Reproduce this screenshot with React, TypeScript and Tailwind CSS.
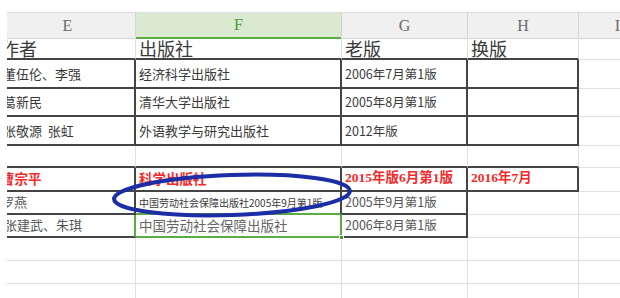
import React from 'react';

// 表格截图：出版信息对照（带圈注）
const cjk = "font-['Noto_Sans_CJK_SC',sans-serif]";
const row = 'grid grid-cols-[136px_206px_126px_111px_78px]';

function HeaderCell({ label, active }: { label: string; active?: boolean }) {
  return active ? (
    <div className="flex items-center justify-center bg-[#d9ead1] border-r border-r-[#d0d0d0] border-b-2 border-b-[#5dab44] text-[#4a9a33]">
      {label}
    </div>
  ) : (
    <div className="flex items-center justify-center bg-[#f0f0f0] border-r border-b border-[#d4d4d4] text-[#6a6a6a]">
      {label}
    </div>
  );
}

export default function App() {
  return (
    <div className="relative w-[620px] h-[298px] bg-white overflow-hidden">
      <div className="pt-[12px] pl-[7px]">
        <div className="overflow-hidden border-t border-[#dedede]">
          <div className={`-ml-[7px] ${cjk} text-[#3a3a3a]`}>
            {/* 列标题 */}
            <div className={`${row} h-[23px] font-['Liberation_Serif',serif] text-[16px]`}>
              <HeaderCell label="E" />
              <HeaderCell label="F" active />
              <HeaderCell label="G" />
              <HeaderCell label="H" />
              <HeaderCell label="I" />
            </div>

            {/* 表头 */}
            <div className={`${row} h-[24px] text-[18px] leading-[20px]`}>
              <div className="flex items-end pl-[1px] border-r border-r-[#e0e0e0] border-b-2 border-b-[#444]">作者</div>
              <div className="flex items-end pl-[3px] border-r border-r-[#e0e0e0] border-b-2 border-b-[#444]">出版社</div>
              <div className="flex items-end pl-[3px] border-r border-r-[#e0e0e0] border-b-2 border-b-[#444]">老版</div>
              <div className="flex items-end pl-[3px] border-r border-r-[#e0e0e0] border-b-2 border-b-[#444]">换版</div>
              <div className="border-r border-b border-[#e0e0e0]" />
            </div>

            {/* 第一组 */}
            {[
              { h: 'h-[29px]', a: '董伍伦、李强', b: '经济科学出版社', c: '2006年7月第1版' },
              { h: 'h-[28px]', a: '葛新民', b: '清华大学出版社', c: '2005年8月第1版' },
              { h: 'h-[29px]', a: '张敬源\u00a0\u00a0张虹', b: '外语教学与研究出版社', c: '2012年版' },
            ].map((r, i) => (
              <div key={i} className={`${row} ${r.h} text-[13px] leading-[16px]`}>
                <div className="flex items-end pb-[5px] pl-[3px] whitespace-nowrap border-r-2 border-b-2 border-[#444]">{r.a}</div>
                <div className="flex items-end pb-[5px] pl-[3px] whitespace-nowrap border-r-2 border-b-2 border-[#444]">{r.b}</div>
                <div className="flex items-end pb-[5px] pl-[3px] whitespace-nowrap text-[12.5px] border-r-2 border-b-2 border-[#444]">{r.c}</div>
                <div className="border-r-2 border-b-2 border-[#444]" />
                <div className="border-r border-b border-[#e0e0e0]" />
              </div>
            ))}

            {/* 空行 */}
            <div className={`${row} h-[22px]`}>
              <div className="border-r border-r-[#e0e0e0] border-b-2 border-b-[#444]" />
              <div className="border-r border-r-[#e0e0e0] border-b-2 border-b-[#444]" />
              <div className="border-r border-r-[#e0e0e0] border-b-2 border-b-[#444]" />
              <div className="border-r border-r-[#e0e0e0] border-b-2 border-b-[#444]" />
              <div className="border-r border-b border-[#e0e0e0]" />
            </div>

            {/* 新版（红字） */}
            <div className={`${row} h-[24px] text-[13.5px] leading-[16px] font-bold text-[#f42a2a]`}>
              <div className="flex items-end pb-[4px] pl-[1px] whitespace-nowrap border-r-2 border-b-2 border-[#444]">曹宗平</div>
              <div className="flex items-end pb-[4px] pl-[3px] whitespace-nowrap border-r-2 border-b-2 border-[#444]">科学出版社</div>
              <div className="flex items-end pb-[4px] pl-[3px] whitespace-nowrap font-['Liberation_Serif','Noto_Sans_CJK_SC',serif] border-r-2 border-b-2 border-[#444]">2015年版6月第1版</div>
              <div className="flex items-end pb-[4px] pl-[3px] whitespace-nowrap font-['Liberation_Serif','Noto_Sans_CJK_SC',serif] border-r-2 border-b-2 border-[#444]">2016年7月</div>
              <div className="border-r border-b border-[#e0e0e0]" />
            </div>

            <div className={`${row} h-[23px] text-[13px] leading-[16px]`}>
              <div className="flex items-end pb-[3px] pl-[1px] whitespace-nowrap text-[#555] border-r-2 border-b-2 border-[#444]">罗燕</div>
              <div className="flex items-end pb-[4px] pl-[3px] whitespace-nowrap text-[10px] leading-[13px] border-r-2 border-r-[#444] border-b-2 border-b-[#5dab44]">中国劳动社会保障出版社2005年9月第1版</div>
              <div className="flex items-end pb-[3px] pl-[3px] whitespace-nowrap text-[12.5px] text-[#555] border-r-2 border-b-2 border-[#444]">2005年9月第1版</div>
              <div className="border-r border-b border-[#e0e0e0]" />
              <div className="border-r border-b border-[#e0e0e0]" />
            </div>

            <div className={`${row} h-[23px] text-[13px] leading-[16px]`}>
              <div className="flex items-end pb-[3px] pl-[4px] whitespace-nowrap text-[#555] border-r-2 border-r-[#5dab44] border-b-2 border-b-[#444]">张建武、朱琪</div>
              <div className="relative flex items-end pb-[3px] pl-[3px] whitespace-nowrap text-[13.5px] text-[#666] border-r-2 border-b-2 border-[#5dab44]">
                中国劳动社会保障出版社
                <span className="absolute -right-[4px] -bottom-[4px] w-[5px] h-[5px] bg-[#4d9a35] border border-white" />
              </div>
              <div className="flex items-end pb-[3px] pl-[3px] whitespace-nowrap text-[12.5px] text-[#555] border-r-2 border-b-2 border-[#444]">2006年8月第1版</div>
              <div className="border-r border-b border-[#e0e0e0]" />
              <div className="border-r border-b border-[#e0e0e0]" />
            </div>

            {/* 空白行 */}
            {['h-[23px]', 'h-[23px]', 'h-[23px]'].map((h, i) => (
              <div key={i} className={`${row} ${h}`}>
                <div className="border-r border-b border-[#e0e0e0]" />
                <div className="border-r border-b border-[#e0e0e0]" />
                <div className="border-r border-b border-[#e0e0e0]" />
                <div className="border-r border-b border-[#e0e0e0]" />
                <div className="border-r border-b border-[#e0e0e0]" />
              </div>
            ))}
          </div>
        </div>
      </div>

      {/* 手绘圈注 */}
      <svg className="absolute left-0 top-0 pointer-events-none" width="620" height="298" viewBox="0 0 620 298">
        <ellipse cx="232" cy="195" rx="118" ry="20" fill="none" stroke="#1b2ea6" strokeWidth="4" transform="rotate(-2 232 195)" />
      </svg>
    </div>
  );
}
